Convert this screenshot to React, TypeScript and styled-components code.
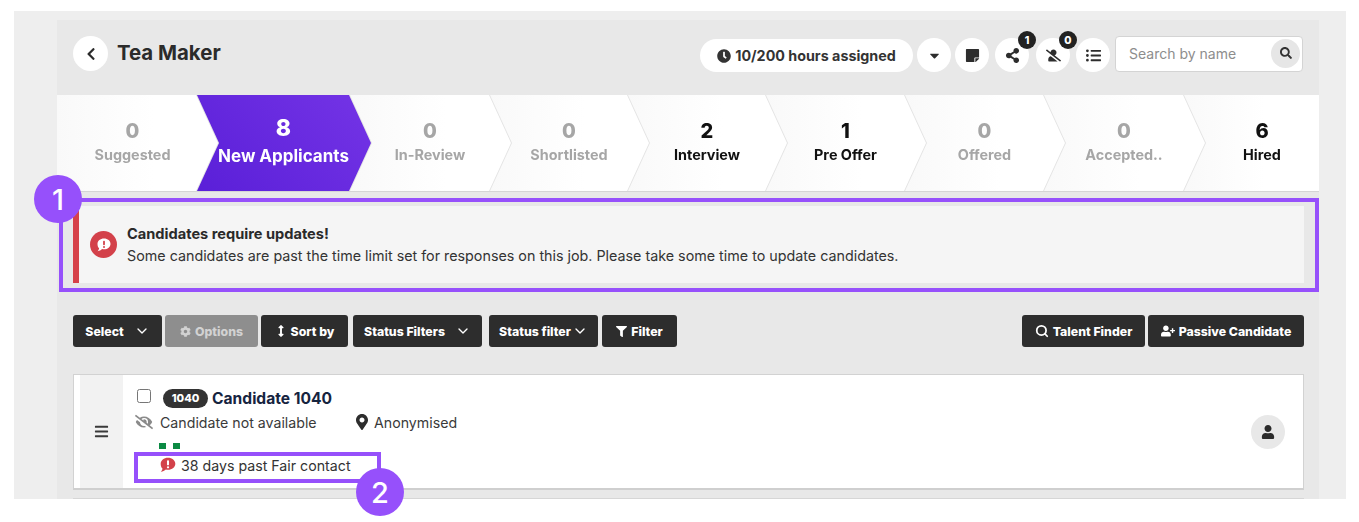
import React from "react";
import styled, { createGlobalStyle } from "styled-components";
import {
  FaArrowsAltV, FaBars, FaCaretDown, FaChevronLeft, FaClock, FaCog, FaEyeSlash, FaFilter,
  FaListUl, FaMapMarkerAlt, FaSearch, FaShareAlt, FaStickyNote, FaUser, FaUserPlus, FaUserSlash,
} from "react-icons/fa";
import { FiChevronDown, FiSearch } from "react-icons/fi";

const Global = createGlobalStyle`
  html, body { margin: 0; padding: 0; background: #fff; }
  body { font-family: "Inter", "Liberation Sans", sans-serif; color: #2d2d2d; }
  * { box-sizing: border-box; }
`;

const Stage = styled.div`
  position: relative;
  width: 1359px;
  height: 522px;
  padding-top: 11px;
  overflow: hidden;
`;
const Outer = styled.div`
  margin-left: 14px;
  width: 1332px;
  height: 488px;
  background: #eeeeee;
  padding: 9px 27px 0 43px;
`;
const Panel = styled.div`
  width: 1262px;
  height: 479px;
  background: #e8e8e8;
  display: flex;
  flex-direction: column;
`;
const Header = styled.header`
  height: 75px;
  flex: none;
  display: flex;
  align-items: flex-start;
  padding: 16px 16px 0;
`;
const BackButton = styled.div`
  width: 35px;
  height: 35px;
  border-radius: 50%;
  background: #fff;
  display: flex;
  align-items: center;
  justify-content: center;
  font-size: 14px;
  color: #2b2b2b;
  margin-right: 9px;
`;
const Title = styled.h1`
  margin: 3px 0 0;
  font-size: 20.4px;
  line-height: 28px;
  font-weight: 700;
  color: #2b2b2b;
  flex: 1;
`;
const Tools = styled.div`
  display: flex;
  align-items: flex-start;
`;
const HoursPill = styled.div`
  height: 33px;
  width: 213px;
  margin-top: 3px;
  border-radius: 17px;
  background: #fff;
  display: flex;
  align-items: center;
  justify-content: center;
  gap: 4px;
  font-size: 14.3px;
  font-weight: 700;
  color: #333;
  margin-right: 4px;
`;
const RoundTool = styled.div<{ $gap: number }>`
  position: relative;
  width: 34px;
  height: 34px;
  margin-top: 2px;
  margin-right: ${(p) => p.$gap}px;
  border-radius: 50%;
  background: #fff;
  display: flex;
  align-items: center;
  justify-content: center;
  font-size: 15px;
  color: #2d2d2d;
`;
const CountBadge = styled.span`
  position: absolute;
  top: -7px;
  right: -7px;
  width: 18px;
  height: 18px;
  border-radius: 50%;
  background: #222;
  color: #fff;
  font-size: 10.5px;
  font-weight: 800;
  display: flex;
  align-items: center;
  justify-content: center;
`;
const SearchBox = styled.div`
  width: 188px;
  height: 36px;
  background: #fff;
  border: 1px solid #d4d4d4;
  border-radius: 4px;
  display: flex;
  align-items: center;
  justify-content: space-between;
  padding: 0 2px 2px 13px;
  font-size: 14px;
  color: #8d8d8d;
`;
const SearchButton = styled.span`
  width: 29px;
  height: 29px;
  border-radius: 50%;
  background: #e6e6e6;
  color: #333;
  font-size: 12px;
  display: flex;
  align-items: center;
  justify-content: center;
`;

const Stepper = styled.nav`
  height: 97px;
  flex: none;
  display: flex;
  background: #fff;
  border-bottom: 1px solid #d5d5d5;
  overflow: hidden;
`;
const Step = styled.div<{ $width: number; $z: number; $last: boolean }>`
  flex: none;
  width: ${(p) => p.$width + (p.$last ? 0 : 22)}px;
  margin-right: ${(p) => (p.$last ? 0 : -22)}px;
  position: relative;
  z-index: ${(p) => p.$z};
  filter: drop-shadow(1px 0 0 #e4e4e4);
`;
const StepShape = styled.div<{ $first: boolean; $last: boolean; $active: boolean; $dim: boolean }>`
  height: 96px;
  display: flex;
  flex-direction: column;
  align-items: center;
  padding-top: 23px;
  padding-right: ${(p) => (p.$first ? 10 : 0)}px;
  padding-left: ${(p) => (p.$last ? 22 : 0)}px;
  clip-path: polygon(
    0 0,
    ${(p) => (p.$last ? "100% 0, 100% 100%" : "calc(100% - 22px) 0, 100% 50%, calc(100% - 22px) 100%")},
    0 100%
    ${(p) => (p.$first ? "" : ", 22px 50%")}
  );
  background: ${(p) =>
    p.$active
      ? "linear-gradient(45deg, #5a1fd8 0%, #7434e6 100%)"
      : "linear-gradient(90deg, #f9f9f9 0%, #ffffff 60%, #fff 100%)"};
  color: ${(p) => (p.$active ? "#fff" : p.$dim ? "#a6a6a6" : "#111")};
`;
const StepCount = styled.div<{ $active: boolean }>`
  font-size: ${(p) => (p.$active ? 23 : 20)}px;
  line-height: ${(p) => (p.$active ? 24 : 26)}px;
  font-weight: 800;
  margin-top: ${(p) => (p.$active ? -2 : 0)}px;
`;
const StepLabel = styled.div<{ $active: boolean }>`
  font-size: ${(p) => (p.$active ? 17 : 14.4)}px;
  line-height: 20px;
  font-weight: 700;
  margin-top: ${(p) => (p.$active ? 6 : 1)}px;
  white-space: nowrap;
`;

const Alert = styled.section`
  margin: 14px 15px 0 16px;
  height: 77px;
  flex: none;
  background: #f5f5f5;
  border-left: 6px solid #d6424a;
  display: flex;
  align-items: center;
  padding-left: 11px;
  gap: 10px;
`;
const AlertIcon = styled.div`
  width: 27px;
  height: 27px;
  border-radius: 50%;
  background: #d3414a;
  display: flex;
  align-items: center;
  justify-content: center;
  flex: none;
`;
const AlertText = styled.div`
  font-size: 14.3px;
  line-height: 22px;
  color: #333;
`;
const AlertTitle = styled.div`
  font-size: 14.6px;
  font-weight: 700;
  color: #2a2a2a;
`;

const Toolbar = styled.div`
  margin: 32px 15px 0 16px;
  height: 32px;
  flex: none;
  display: flex;
  justify-content: space-between;
`;
const ButtonRow = styled.div`
  display: flex;
`;
const ToolButton = styled.div<{ $w: number; $gap: number; $off?: boolean }>`
  width: ${(p) => p.$w}px;
  margin-right: ${(p) => p.$gap}px;
  height: 32px;
  border-radius: 3px;
  background: ${(p) => (p.$off ? "#8e8e8e" : "#2d2d2d")};
  color: ${(p) => (p.$off ? "#d2d2d2" : "#fff")};
  font-size: 12.3px;
  font-weight: 800;
  display: flex;
  align-items: center;
  justify-content: center;
  gap: 4px;
  white-space: nowrap;
`;
const Chevron = styled(FiChevronDown)<{ $gap: number }>`
  margin-left: ${(p) => p.$gap}px;
`;
const Card = styled.article`
  margin: 27px 15px 0 16px;
  height: 116px;
  flex: none;
  background: #fff;
  border: 1px solid #d2d2d2;
  border-bottom: 2px solid #cfcfcf;
  display: flex;
  padding-left: 6px;
`;
const Handle = styled.div`
  width: 43px;
  background: #f2f2f2;
  display: flex;
  align-items: center;
  justify-content: center;
  font-size: 15px;
  color: #3a3a3a;
  flex: none;
`;
const CardBody = styled.div`
  flex: 1;
  padding: 11px 0 0 12px;
`;
const NameRow = styled.div`
  display: flex;
  align-items: center;
  height: 24px;
`;
const Check = styled.span`
  width: 14px;
  height: 14px;
  border: 1px solid #767676;
  border-radius: 2.5px;
  background: #fff;
  margin: -4px 12px 0 2px;
  flex: none;
`;
const IdBadge = styled.span`
  width: 45px;
  height: 19px;
  border-radius: 10px;
  background: #333;
  color: #fff;
  font-size: 11px;
  font-weight: 800;
  display: flex;
  align-items: center;
  justify-content: center;
  margin-right: 4px;
`;
const Name = styled.span`
  font-size: 15.6px;
  font-weight: 700;
  color: #16243f;
`;
const MetaRow = styled.div`
  display: flex;
  align-items: center;
  height: 20px;
  margin-top: 2px;
  font-size: 14.2px;
  color: #3a3a3a;
`;
const MetaItem = styled.span<{ $w: number; $gap: number }>`
  width: ${(p) => p.$w}px;
  display: flex;
  align-items: center;
  gap: ${(p) => p.$gap}px;
`;
const Dots = styled.div`
  display: flex;
  gap: 7px;
  margin: 11px 0 0 24px;
`;
const Dot = styled.span`
  width: 7px;
  height: 6px;
  background: #0b8a43;
`;
const Warning = styled.div`
  display: flex;
  align-items: center;
  gap: 4px;
  margin: 6px 0 0 24px;
  height: 20px;
  font-size: 14.2px;
  color: #333;
`;
const Avatar = styled.div`
  width: 34px;
  height: 34px;
  border-radius: 50%;
  background: #e8e8e8;
  align-self: center;
  margin-right: 18px;
  display: flex;
  align-items: center;
  justify-content: center;
  font-size: 14px;
  color: #2b2b2b;
`;
const Rule = styled.div`
  margin: 8px 15px 0 16px;
  border-top: 1px solid #d6d6d6;
`;

const Highlight = styled.div<{ $x: number; $y: number; $w: number; $h: number }>`
  position: absolute;
  left: ${(p) => p.$x}px;
  top: ${(p) => p.$y}px;
  width: ${(p) => p.$w}px;
  height: ${(p) => p.$h}px;
  border: 4px solid #9650fb;
  z-index: 20;
`;
const Marker = styled.div<{ $x: number; $y: number }>`
  position: absolute;
  left: ${(p) => p.$x}px;
  top: ${(p) => p.$y}px;
  width: 48px;
  height: 48px;
  border-radius: 50%;
  background: #9650fb;
  color: #fff;
  font-size: 29px;
  font-family: "Inter", sans-serif;
  font-weight: 500;
  display: flex;
  align-items: center;
  justify-content: center;
  z-index: 21;
`;

const Bubble = ({ size, fill, mark }: { size: number; fill: string; mark: string }) => (
  <svg width={size} height={size} viewBox="0 0 16 16" aria-hidden="true">
    <path d="M8 1.5c3.7 0 6.5 2.4 6.5 5.4S11.7 12.3 8 12.3c-.7 0-1.3-.1-1.9-.2C5 13.2 3.4 14 1.6 14.2c.8-.8 1.4-1.9 1.5-3C2 10.2 1.500 8.700 1.500 6.900 1.500 3.900 4.300 1.500 8 1.500Z" fill={fill} />
    <rect x="7.1" y="3.700" width="1.800" height="4.600" rx=".8" fill={mark} />
    <circle cx="8" cy="10" r="1" fill={mark} />
  </svg>
);

const steps = [
  { n: 0, label: "Suggested", w: 139 },
  { n: 8, label: "New Applicants", w: 153 },
  { n: 0, label: "In-Review", w: 140 },
  { n: 0, label: "Shortlisted", w: 138 },
  { n: 2, label: "Interview", w: 138 },
  { n: 1, label: "Pre Offer", w: 139 },
  { n: 0, label: "Offered", w: 139 },
  { n: 0, label: "Accepted..", w: 140 },
  { n: 6, label: "Hired", w: 136 },
];

export default function App() {
  return (
    <Stage>
      <Global />
      <Outer>
        <Panel>
          <Header>
            <BackButton><FaChevronLeft /></BackButton>
            <Title>Tea Maker</Title>
            <Tools>
              <HoursPill><FaClock size={14} /> 10/200 hours assigned</HoursPill>
              <RoundTool $gap={4}><FaCaretDown /></RoundTool>
              <RoundTool $gap={6}><FaStickyNote /></RoundTool>
              <RoundTool $gap={7}><FaShareAlt /><CountBadge>1</CountBadge></RoundTool>
              <RoundTool $gap={6}><FaUserSlash /><CountBadge>0</CountBadge></RoundTool>
              <RoundTool $gap={5}><FaListUl /></RoundTool>
              <SearchBox>Search by name<SearchButton><FaSearch /></SearchButton></SearchBox>
            </Tools>
          </Header>
          <Stepper>
            {steps.map((s, i) => {
              const active = i === 1;
              const first = i === 0;
              const last = i === steps.length - 1;
              return (
                <Step key={s.label} $width={s.w} $z={steps.length - i} $last={last}>
                  <StepShape $first={first} $last={last} $active={active} $dim={s.n === 0}>
                    <StepCount $active={active}>{s.n}</StepCount>
                    <StepLabel $active={active}>{s.label}</StepLabel>
                  </StepShape>
                </Step>
              );
            })}
          </Stepper>
          <Alert>
            <AlertIcon><Bubble size={16} fill="#fff" mark="#d3414a" /></AlertIcon>
            <AlertText>
              <AlertTitle>Candidates require updates!</AlertTitle>
              Some candidates are past the time limit set for responses on this job. Please take some time to update candidates.
            </AlertText>
          </Alert>
          <Toolbar>
            <ButtonRow>
              <ToolButton $w={89} $gap={3}>Select <Chevron size={16} $gap={6} /></ToolButton>
              <ToolButton $w={93} $gap={3} $off><FaCog size={11} /> Options</ToolButton>
              <ToolButton $w={87} $gap={5}><FaArrowsAltV size={12} /> Sort by</ToolButton>
              <ToolButton $w={129} $gap={7}>Status Filters <Chevron size={16} $gap={6} /></ToolButton>
              <ToolButton $w={109} $gap={4}>Status filter <Chevron size={16} $gap={-3} /></ToolButton>
              <ToolButton $w={75} $gap={0}><FaFilter size={11} /> Filter</ToolButton>
            </ButtonRow>
            <ButtonRow>
              <ToolButton $w={123} $gap={3}><FiSearch size={14} strokeWidth={3} /> Talent Finder</ToolButton>
              <ToolButton $w={156} $gap={0}><FaUserPlus size={14} /> Passive Candidate</ToolButton>
            </ButtonRow>
          </Toolbar>
          <Card>
            <Handle><FaBars /></Handle>
            <CardBody>
              <NameRow>
                <Check />
                <IdBadge>1040</IdBadge>
                <Name>Candidate 1040</Name>
              </NameRow>
              <MetaRow>
                <MetaItem $w={219} $gap={7}><FaEyeSlash size={18} color="#8a8a8a" /> Candidate not available</MetaItem>
                <MetaItem $w={120} $gap={4}><FaMapMarkerAlt size={16} color="#2d2d2d" /> Anonymised</MetaItem>
              </MetaRow>
              <Dots><Dot /><Dot /></Dots>
              <Warning><Bubble size={18} fill="#d3414a" mark="#fff" /> 38 days past Fair contact</Warning>
            </CardBody>
            <Avatar><FaUser /></Avatar>
          </Card>
          <Rule />
        </Panel>
      </Outer>
      <Highlight $x={59} $y={198} $w={1260} $h={94} />
      <Highlight $x={134} $y={452} $w={247} $h={31} />
      <Marker $x={34} $y={175}>1</Marker>
      <Marker $x={356} $y={468}>2</Marker>
    </Stage>
  );
}
